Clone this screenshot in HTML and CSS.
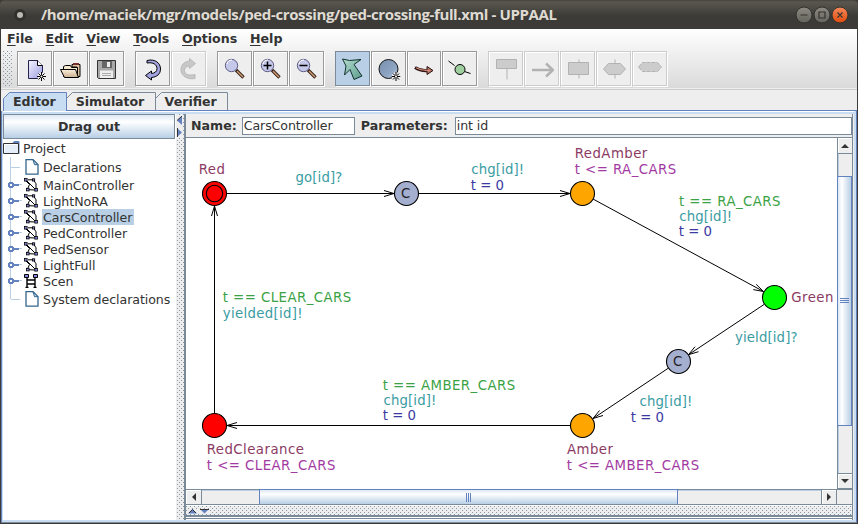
FILE: index.html
```html
<!DOCTYPE html>
<html lang="en">
<head>
<meta charset="utf-8">
<title>UPPAAL</title>
<link rel="stylesheet" href="styles.css">
</head>
<body>
<svg class="defs" aria-hidden="true">
  <defs>
    <linearGradient id="blue" x1="0" y1="0" x2="1" y2="1"><stop offset="0" stop-color="#f4f4ff"/><stop offset="1" stop-color="#9c9ce0"/></linearGradient>
    <linearGradient id="fold" x1="0" y1="0" x2="0" y2="1"><stop offset="0" stop-color="#fff0dc"/><stop offset="1" stop-color="#c8ae90"/></linearGradient>
    <linearGradient id="steel" x1="0" y1="0" x2="1" y2="1"><stop offset="0" stop-color="#7890b0"/><stop offset=".6" stop-color="#8ca4c0"/><stop offset="1" stop-color="#b4c4dc"/></linearGradient>
    <linearGradient id="teal" x1="0" y1="0" x2="1" y2="1"><stop offset="0" stop-color="#b4dcd0"/><stop offset="1" stop-color="#5c9c8c"/></linearGradient>
    <symbol id="spark" viewBox="0 0 9 9"><path d="M4.500 0v9M0 4.500h9M1.500 1.500l6 6M7.500 1.500l-6 6" stroke="#000"/><circle cx="4.500" cy="4.500" r="1" fill="#fff"/></symbol>
    <symbol id="lens" viewBox="0 0 24 24"><path d="M13 13l7.500 7.500" stroke="#332019" stroke-width="3.400"/><path d="M14 14l6 6" stroke="#d29b70" stroke-width="1.500"/><circle cx="8.500" cy="8.500" r="6.200" fill="#c5c8e8" stroke="#5c5c84"/><path d="M4 7a5 5 0 0 1 5-4" fill="none" stroke="#fff"/></symbol>
    <symbol id="doc" viewBox="0 0 14 16"><path d="M1 .7h7l5 5v9.500H1z" fill="#fff" stroke="#34658c" stroke-width="1.300"/><path d="M8 .7l5 5H9.500z" fill="#b8cfe5" stroke="#34658c"/></symbol>
    <symbol id="auto" viewBox="0 0 14 14"><path d="M2 2l10 10M4 1.800h5.500l2.500 4v5.500M2 3l3.500 3.500-2 4.500M5 11.700l6 .3" fill="none" stroke="#000"/><g fill="#8888e0" stroke="#000" stroke-width=".8"><rect x=".5" y=".5" width="2.600" height="2.600"/><rect x="8.500" y=".8" width="2.200" height="2.200"/><rect x="2.500" y="10.300" width="2.600" height="2.600"/><rect x="10.800" y="10.500" width="2.600" height="2.600"/></g></symbol>
  </defs>
</svg>
<div class="window">
  <header class="titlebar">
    <span class="dot"></span>
    <h1>/home/maciek/mgr/models/ped-crossing/ped-crossing-full.xml - UPPAAL</h1>
    <svg class="controls" width="54" height="18" viewBox="0 0 54 18">
      <defs><linearGradient id="gb" x2="0" y2="1"><stop stop-color="#8c8a82"/><stop offset="1" stop-color="#64635c"/></linearGradient><linearGradient id="ob" x2="0" y2="1"><stop stop-color="#f68a5c"/><stop offset="1" stop-color="#df4b0b"/></linearGradient></defs>
      <g stroke="#33322d"><circle cx="9" cy="9" r="8" fill="url(#gb)"/><circle cx="27" cy="9" r="8" fill="url(#gb)"/><circle cx="45" cy="9" r="8" fill="url(#ob)"/></g>
      <path d="M5.500 9h7M24 6h6v6h-6zM42.500 6.500l5 5M47.500 6.500l-5 5" fill="none" stroke="#34332f" stroke-width="1.200"/>
    </svg>
  </header>
  <div class="top">
    <nav class="menu"><a><u>F</u>ile</a><a><u>E</u>dit</a><a><u>V</u>iew</a><a><u>T</u>ools</a><a><u>O</u>ptions</a><a><u>H</u>elp</a></nav>
    <div class="toolbar">
      <i class="grip"></i>
      <div class="group">
        <button><svg viewBox="0 0 24 24"><path d="M5.500 3.500h9l5 5v13h-14z" fill="url(#blue)" stroke="#22224c"/><path d="M14.500 3.500v5h5" fill="#fff" stroke="#000"/><circle cx="18.500" cy="19.500" r="4" fill="#eee"/><use href="#spark" x="14" y="15" width="9" height="9"/></svg></button>
        <button><svg viewBox="0 0 24 24"><path d="M13 7.500h8v12h-3V10h-5z" fill="#dfc4a2" stroke="#000"/><path d="M14 7h6" stroke="#7a3030" stroke-width="2"/><path d="M4.500 19.500V9.500l2-1h5l1 2h6v9z" fill="#f8e8d0" stroke="#000"/><path d="M1.500 12.500h15l3 8H5.500z" fill="url(#fold)" stroke="#000"/></svg></button>
        <button><svg viewBox="0 0 24 24"><path d="M2.500 3.500h18v18h-17l-1-1z" fill="#a8a8a8" stroke="#333"/><path d="M7 4h10v7H7z" fill="#666"/><path d="M12 5h3v5h-3z" fill="#eee"/><path d="M5 13.500h13v7.500H5z" fill="#eee"/><path d="M7 16.500h9M7 18.500h9" stroke="#aaa"/></svg></button>
      </div>
      <div class="group">
        <button><svg viewBox="0 0 24 24"><path d="M6 3.500C14 1.500 19.500 6 19.500 12c0 5-3.500 8-9 8.500V23l-6-4.500 6-4.500v2.500c3.500-.3 5.500-2 5.500-5C16 7.500 12 5 6 6z" fill="#a3a3e0" stroke="#000"/></svg></button>
        <button class="off"><svg viewBox="0 0 24 24"><path d="M18 21.500C10 23 4 18.500 4 13c0-5 3-8.500 8.500-9V1.500l6 5-6 5V9C9 9.300 7.500 11 7.500 13.500c0 4 5 5.500 10.500 4z" fill="#c8c8c8" stroke="#b9b9b9"/></svg></button>
      </div>
      <div class="group">
        <button><svg viewBox="0 0 24 24"><use href="#lens"/></svg></button>
        <button><svg viewBox="0 0 24 24"><use href="#lens"/><path d="M4.500 8.500h8M8.500 4.500v8" stroke="#000" stroke-width="1.500"/></svg></button>
        <button><svg viewBox="0 0 24 24"><use href="#lens"/><path d="M4.500 8.500h8" stroke="#000" stroke-width="1.500"/></svg></button>
      </div>
      <div class="group">
        <button class="on"><svg viewBox="0 0 24 24"><path d="M1.500 2l7 1.500 11.500-1-5 3.500-2 1.500 8 11.500-8 3.500L9 12.500l-5.500 5.500 1.500-9z" fill="url(#teal)" stroke="#12312b"/></svg></button>
        <button><svg viewBox="0 0 24 24"><circle cx="11.500" cy="12" r="9.500" fill="url(#steel)" stroke="#111"/><circle cx="19" cy="19.500" r="4.200" fill="#eee"/><use href="#spark" x="14.500" y="15" width="9" height="9"/></svg></button>
        <button class="slim"><svg viewBox="0 0 24 24"><path d="M3 10.500q6 4 14 3" fill="none" stroke="#2a1010" stroke-width="3"/><path d="M15 9.500l6 4-6 4z" fill="#ba7868" stroke="#2a1010"/><path d="M4 10.800q6 3.500 14 2.700" fill="none" stroke="#d08c78" stroke-width="1.200"/></svg></button>
        <button><svg viewBox="0 0 24 24"><path d="M.5 4l6 4.500M16.500 14.500l6 2" stroke="#000"/><circle cx="12" cy="12.500" r="5" fill="#9fcf9f" stroke="#000"/></svg></button>
      </div>
      <div class="group">
        <button class="off"><svg viewBox="0 0 24 24"><path d="M2.500 2.500h20v9h-20zM13 11.500v11" fill="#ccc" stroke="#b2b2b2"/></svg></button>
        <button class="off"><svg viewBox="0 0 24 24"><path d="M2 13h20M16 6.500l7 6.500-7 6.500" fill="none" stroke="#b2b2b2" stroke-width="2.400"/></svg></button>
        <button class="off"><svg viewBox="0 0 24 24"><path d="M2.500 5.500h20v12h-20zM13 2.500v3M13 17.500v4" fill="#ccc" stroke="#b2b2b2"/></svg></button>
        <button class="off"><svg viewBox="0 0 24 24"><path d="M1.500 12l5-5.500h12l5 5.500-5 5.500h-12zM13 2.500v4M13 17.500v4" fill="#ccc" stroke="#b2b2b2"/></svg></button>
        <button class="off"><svg viewBox="0 0 24 24"><path d="M.5 10l4-4.500h15l4 4.500-4 4.500h-15z" fill="#ccc" stroke="#b2b2b2" stroke-dasharray="4 1"/></svg></button>
      </div>
    </div>
  </div>
  <div class="tabs">
    <svg class="tabshape" width="230" height="19" viewBox="0 0 230 19"><path d="M.5 19V6.500l6-6H63.500V19" fill="#c8ddf2" stroke="#6382bf"/><path d="M63.500 6.500l6-6H152.500V18M152.500 6.500l6-6H224.500V18" fill="none" stroke="#7a8a99"/></svg>
    <b class="tab t1">Editor</b><b class="tab t2">Simulator</b><b class="tab t3">Verifier</b>
  </div>
  <main class="pane">
    <aside class="side">
      <button class="drag">Drag out</button>
      <ul class="tree">
        <li class="root"><svg width="17" height="14" viewBox="0 0 17 14"><path d="M10 2l1-1.500h5V13" fill="#6382bf" stroke="#6382bf"/><path d="M.5 2.500h15v10H.5z" fill="#e4eef8" stroke="#333"/><path d="M1.500 11V3.500H14" fill="none" stroke="#fff"/></svg><span>Project</span></li>
        <li class="leaf"><i></i><svg width="14" height="16"><use href="#doc"/></svg><span>Declarations</span></li>
        <li><i class="knob"></i><svg width="14" height="14"><use href="#auto"/></svg><span>MainController</span></li>
        <li><i class="knob"></i><svg width="14" height="14"><use href="#auto"/></svg><span>LightNoRA</span></li>
        <li><i class="knob"></i><svg width="14" height="14"><use href="#auto"/></svg><span class="sel">CarsController</span></li>
        <li><i class="knob"></i><svg width="14" height="14"><use href="#auto"/></svg><span>PedController</span></li>
        <li><i class="knob"></i><svg width="14" height="14"><use href="#auto"/></svg><span>PedSensor</span></li>
        <li><i class="knob"></i><svg width="14" height="14"><use href="#auto"/></svg><span>LightFull</span></li>
        <li><i class="knob"></i><svg width="14" height="14" viewBox="0 0 14 14"><path d="M3 3v10M11 3v10M3 6h8M3 10h8M1.500 13.500h3M9.500 13.500h3" stroke="#000" stroke-width="1.400"/><path d="M.5.500h4v3h-4zM9.500.500h4v3h-4z" fill="#8888e0" stroke="#000"/></svg><span>Scen</span></li>
        <li class="leaf last"><i></i><svg width="14" height="16"><use href="#doc"/></svg><span>System declarations</span></li>
      </ul>
    </aside>
    <div class="vsplit"><svg width="6" height="22" viewBox="0 0 6 22"><path d="M5 0v9L0 4.500z" fill="#6382bf"/><path d="M5 0L0 4.500" stroke="#333"/><path d="M0 12v9l5-4.500z" fill="#6382bf"/><path d="M.5 12v9" stroke="#333"/></svg></div>
    <section class="work">
      <div class="fields"><label>Name:</label><input class="name" value="CarsController"><label class="l2">Parameters:</label><input class="params" value="int id"></div>
      <div class="view">
        <svg class="canvas" width="651" height="351" viewBox="186 138 651 351">
          <g stroke="#000" stroke-width="1" fill="none">
            <path d="M226.500 193.500H394M384 190.500l10 3-10 3M418.500 193.500H570M560 190.500l10 3-10 3M214.500 413V206M211.500 216l3-10 3 10M570 425.500H227M237 422.500l-10 3 10 3"/>
            <path d="M593 199L763.500 291.500M753.300 289.600l10.200 1.900-7.300-7.200M764 304.500L688.500 354.700M698.500 351.700l-10 3 6.500-8M668.300 368.200L593 418.500M603 415.500l-10 3 6.500-8"/>
            <g stroke-width="1.100"><circle cx="214.500" cy="193.500" r="12" fill="red"/><circle cx="214.500" cy="193.500" r="8.200"/><circle cx="406.500" cy="193.500" r="12" fill="#a4aece"/><circle cx="582.500" cy="193.500" r="12" fill="#ffa500"/><circle cx="774.500" cy="297.500" r="12" fill="#0f0"/><circle cx="678.500" cy="361.500" r="12" fill="#a4aece"/><circle cx="582.500" cy="425.500" r="12" fill="#ffa500"/><circle cx="214.500" cy="425.500" r="12" fill="red"/></g>
          </g>
          <g class="loc"><text x="198.700" y="174">Red</text><text x="574.700" y="158">RedAmber</text><text x="791.300" y="302">Green</text><text x="206.700" y="454">RedClearance</text><text x="567" y="454">Amber</text></g>
          <g class="inv"><text x="574.700" y="174">t &lt;= RA_CARS</text><text x="206.800" y="470">t &lt;= CLEAR_CARS</text><text x="566.800" y="470">t &lt;= AMBER_CARS</text></g>
          <g class="guard"><text x="679" y="206">t == RA_CARS</text><text x="222.700" y="302">t == CLEAR_CARS</text><text x="382.700" y="390">t == AMBER_CARS</text></g>
          <g class="sync"><text x="295.500" y="182">go[id]?</text><text x="471.300" y="174">chg[id]!</text><text x="679.300" y="221">chg[id]!</text><text x="735" y="342">yield[id]?</text><text x="639.500" y="406">chg[id]!</text><text class="wide" x="222.700" y="318">yielded[id]!</text><text x="383.500" y="405">chg[id]!</text></g>
          <g class="upd"><text x="470.700" y="190">t = 0</text><text x="678.700" y="236">t = 0</text><text x="630.700" y="422">t = 0</text><text x="382.700" y="420">t = 0</text></g>
          <g class="com"><text x="401" y="198">C</text><text x="673" y="366">C</text></g>
        </svg>
        <div class="vbar"><i class="arrow"><svg width="8" height="4"><path d="M0 4l4-4 4 4z"/></svg></i><i class="track a"></i><i class="thumb"><svg width="9" height="6"><path d="M0 .5h9M0 2.500h9M0 4.500h9" stroke="#6382bf"/></svg></i><i class="track"></i><i class="arrow end"><svg width="8" height="4"><path d="M0 0h8L4 4z"/></svg></i></div>
      </div>
      <div class="hrow"><i class="arrow"><svg width="4" height="8"><path d="M4 0v8L0 4z"/></svg></i><i class="track a"></i><i class="thumb"><svg width="6" height="9"><path d="M.5 0v9M2.500 0v9M4.500 0v9" stroke="#6382bf"/></svg></i><i class="track"></i><i class="arrow end"><svg width="4" height="8"><path d="M0 0v8l4-4z"/></svg></i><i class="corner"></i></div>
      <div class="hsplit"><svg width="22" height="5"><path d="M0 4.500h9L4.500 0z" fill="#6382bf"/><path d="M1 4l3.500-3.500L8 4" fill="none" stroke="#333"/><path d="M12 0h9l-4.500 4.500z" fill="#6382bf"/><path d="M12 .5h9" stroke="#333"/></svg></div>
      <div class="below"></div>
    </section>
  </main>
</div>
</body>
</html>
```
FILE: styles.css
```css
* { box-sizing: border-box; }
body { margin: 0; width: 858px; height: 524px; overflow: hidden; background: #3c3b37; font: 12.600px "DejaVu Sans", sans-serif; color: #333; }
i { display: block; flex: none; }
svg { display: block; flex: none; }
.defs { position: absolute; width: 0; height: 0; }
button { font: inherit; color: inherit; padding: 0; margin: 0; }
.window { width: 858px; height: 524px; display: flex; flex-direction: column; border-radius: 5px 5px 0 0; overflow: hidden; }
.titlebar { height: 29px; flex: none; display: flex; align-items: center; padding: 0 9px 0 14px; background: linear-gradient(#45443f, #59574f 2px, #3c3b37 16px, #3c3b37); }
.dot { width: 12px; height: 12px; border-radius: 50%; border: 3px solid #31302c; background: #bdbab4; }
h1 { margin: 0 auto 0 15px; font: bold 15px/29px "Open Sans", sans-serif; color: #dfdbd2; white-space: nowrap; letter-spacing: -0.380px; }
.top { height: 60px; flex: none; margin: 0 1px; background: linear-gradient(#fff, #dadada); border-bottom: 1px solid #ededed; }
.menu { display: flex; height: 22px; padding-left: 6px; font-weight: bold; line-height: 20px; gap: 12.800px; }
.menu u { text-underline-offset: 2px; }
.toolbar { display: flex; height: 35px; }
.grip { width: 10px; height: 35px; margin: 0 4px 0 2px; background: conic-gradient(at 1px 1px, transparent 75%, #8898aa 0) 0 0 / 4px 4px, conic-gradient(at 1px 1px, transparent 75%, #8898aa 0) 2px 2px / 4px 4px; }
.group { display: flex; gap: 1px; margin-right: 11px; }
.group button { width: 35px; height: 35px; border: 1px solid #999; background: #eee; box-shadow: 1px 1px #fff, inset 1px 1px #fff; display: flex; align-items: center; justify-content: center; }
.group button svg { width: 24px; height: 24px; }
.group .off { border-color: #ccc; }
.group .on { background: #b8cfe5; border-color: #7a8a99; box-shadow: 1px 1px #fff; }
.group .slim { width: 34px; }
.tabs { height: 22px; flex: none; margin: 0 1px; padding-left: 2px; background: #eee; border-top: 1px solid #ccc; display: flex; position: relative; }
.tabs::after { content: ""; position: absolute; left: 65px; right: 0; bottom: 0; height: 1px; background: #6382bf; }
.tabshape { position: absolute; left: 2px; top: 2px; }
.tab { position: relative; line-height: 23px; }
.t1 { margin-left: 10px; }
.t2 { margin-left: 20px; }
.t3 { margin-left: 20.500px; }
.t2 { letter-spacing: -0.100px; }
.pane { height: 412px; margin: 0 1px; display: flex; border: solid #6382bf; border-width: 0 1px 1px; border-bottom-color: #7a8a99; padding: 3px 3px 2px 1px; box-shadow: inset 1px -2px #c8ddf2, inset -2px 0 #c8ddf2; background: linear-gradient(#fff 1px, #c8ddf2 1px, #c8ddf2 3px, #eee 3px); flex: none; }
.side { width: 173px; background: #fff; }
.drag { display: block; width: 172px; height: 25px; border: 1px solid #7a8a99; background: linear-gradient(#dde8f3, #fff 30%, #b8cfe5); font-weight: bold; }
.tree { list-style: none; margin: 0; padding: 0; position: relative; }
.tree::before { content: ""; position: absolute; left: 7px; top: 18px; height: 142px; width: 1px; background: #b8cfe5; }
.tree li { height: 16px; display: flex; align-items: center; white-space: nowrap; position: relative; }
.tree .root { height: 18px; }
.tree .leaf { height: 20px; }
.tree li > i { width: 9px; height: 1px; margin: 0 5px 0 8px; background: #b8cfe5; }
.tree li > .knob { width: 14px; height: 6px; margin: 0 2px 0 5px; background: linear-gradient(#6382bf, #6382bf) 5px 2px / 6px 2px no-repeat, linear-gradient(#b8cfe5, #b8cfe5) 10px 2px / 4px 1px no-repeat, radial-gradient(circle at 3px 3px, #fff 1px, #6382bf 1.5px 3px, transparent 3.200px); }
.tree svg + span { padding: 1px 2px 0 1px; line-height: 15px; margin-left: 4px; letter-spacing: -0.060px; }
.tree .leaf svg + span { margin-left: 3px; }
.tree .root svg + span { margin-left: 2px; padding-top: 0; }
.tree svg + .sel { background: #b8cfe5; }
.vsplit { width: 8px; padding: 2px 1px; background: conic-gradient(at 1px 1px, transparent 75%, #8898aa 0) 3px 0 / 4px 4px, conic-gradient(at 1px 1px, transparent 75%, #8898aa 0) 5px 2px / 4px 4px, #eee; }
.vsplit svg { background: #eee; }
.work { flex: 1; border-left: 2px solid #7a8a99; display: flex; flex-direction: column; min-width: 0; border-right: 1px solid #7a8a99; }
.fields { height: 24px; display: flex; align-items: center; padding: 0 0 0 5px; border-bottom: 1px solid #7a8a99; font-weight: bold; }
input { font: 12.600px "DejaVu Sans", sans-serif; letter-spacing: -0.100px; color: #333; height: 18px; border: 1px solid #7a8a99; padding: 0 1px; margin: 0; background: #fff; outline: 0; }
.name { width: 113px; margin-left: 5px; }
.l2 { margin: 0 7px 0 6px; }
.params { flex: 1; min-width: 0; }
.view { height: 351px; display: flex; }
.canvas { background: #fff; }
.canvas text { font: 13.300px "DejaVu Sans", sans-serif; }
.loc text, .inv text, .guard text { letter-spacing: 0.460px; }
.sync text { letter-spacing: 0.120px; }
.sync .wide { letter-spacing: 0.320px; }
.loc { fill: #8b3a62; } .inv { fill: #a23aa2; } .guard { fill: #3aa244; } .sync { fill: #3a9ca2; } .upd { fill: #3a3aa2; } .com { fill: #222; }
.vbar { flex: 1; display: flex; flex-direction: column; border-left: 1px solid #7a8a99; }
.arrow { display: flex; align-items: center; justify-content: center; fill: #333; box-shadow: inset 1px 1px #fff; }
.vbar .arrow { height: 16px; border-bottom: 1px solid #7a8a99; }
.vbar .end { border-top: 1px solid #7a8a99; }
.vbar .track { flex: 1; border-left: 1px solid #b8cfe5; }
.vbar .track.a { flex: none; height: 22px; }
.thumb { display: flex; align-items: center; justify-content: center; border: 1px solid #6382bf; }
.vbar .thumb { height: 250px; margin-left: -1px; background: linear-gradient(90deg, #dde8f3, #fff 30%, #b8cfe5); }
.hrow { height: 16px; display: flex; border: solid #7a8a99; border-width: 1px 0; }
.hrow .arrow { width: 16px; border-right: 1px solid #7a8a99; }
.hrow .track { flex: 1; border-top: 1px solid #b8cfe5; }
.hrow .track.a { flex: none; width: 57px; }
.hrow .thumb { width: 419px; margin-top: -1px; background: linear-gradient(#dde8f3, #fff 30%, #b8cfe5); border-bottom: 0; }
.hrow .end { border-left: 1px solid #7a8a99; }
.corner { width: 15px; }
.hsplit { height: 10px; padding: 3px 2px; border-top: 1px solid #fff; background: conic-gradient(at 1px 1px, transparent 75%, #8898aa 0) 0 4px / 4px 4px, conic-gradient(at 1px 1px, transparent 75%, #8898aa 0) 2px 6px / 4px 4px, #eee; }
.hsplit svg { background: #eee; }
.below { flex: 1; border-top: 2px solid #7a8a99; background: linear-gradient(#fff 1px, #7a8a99 1px, #7a8a99 2px, #fff 2px); }
```
